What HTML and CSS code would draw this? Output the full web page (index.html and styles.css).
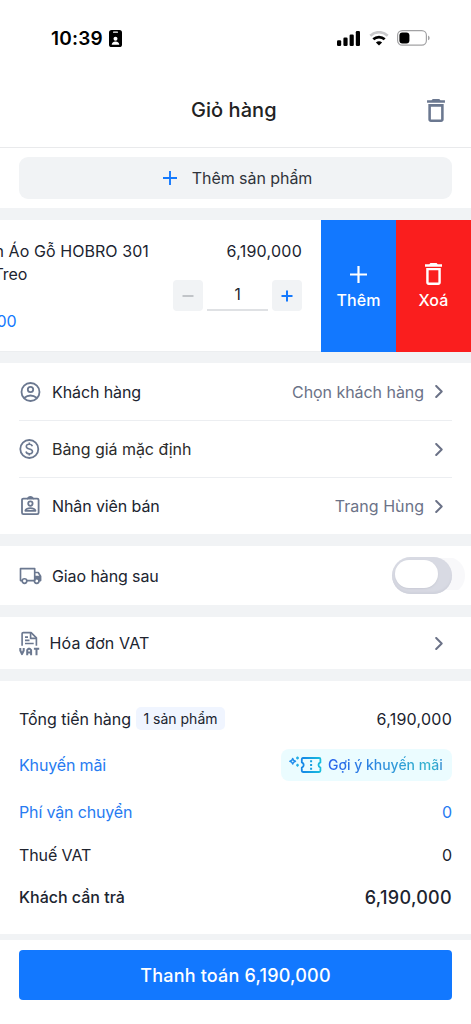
FILE: index.html
```
<!DOCTYPE html>
<html lang="vi">
<head>
<meta charset="utf-8">
<meta name="viewport" content="width=device-width, initial-scale=1">
<title>Giỏ hàng</title>
<link rel="stylesheet" href="styles.css">
</head>
<body>
<svg width="0" height="0" class="defs">
  <symbol id="trash" viewBox="5 3 14 18"><path d="M6 19c0 1.1.9 2 2 2h8c1.1 0 2-.9 2-2V7H6v12zM8 9h8v10H8V9zm7.5-5l-1-1h-5l-1 1H5v2h14V4z"/></symbol>
  <symbol id="chevron" viewBox="0 0 8 13"><path d="M1.200 1l5.500 5.500L1.200 12" fill="none" stroke="currentColor" stroke-width="2" stroke-linecap="round" stroke-linejoin="round"/></symbol>
</svg>
<div class="screen">
  <div class="status">
    <div class="clock">
      <span class="time">10:39</span>
      <svg width="13" height="17" viewBox="0 0 13 17"><rect width="13" height="17" rx="2.600"/><rect x="4" y="1.500" width="5" height="1.300" rx=".6" fill="#fff"/><circle cx="6.500" cy="8.700" r="2" fill="#fff"/><path d="M2.700 14.800c0-2 1.500-3.300 3.800-3.300s3.800 1.300 3.800 3.300z" fill="#fff"/></svg>
    </div>
    <div class="signals">
      <svg width="24" height="15" viewBox="0 0 24 15"><rect y="9.300" width="4.200" height="5.700" rx="1.200"/><rect x="6.400" y="6.500" width="4.200" height="8.500" rx="1.200"/><rect x="12.600" y="3.500" width="4.200" height="11.500" rx="1.200"/><rect x="18.800" y="0" width="4.200" height="15" rx="1.200"/></svg>
      <svg class="wifi" width="20" height="15" viewBox="0 0 20 15" fill="none"><path d="M1.300 4.700C6.300 0 13.700 0 18.700 4.700" stroke="#c9c9cb" stroke-width="2.600"/><path d="M4.300 8.300c3.300-3 8.100-3 11.400 0" stroke="#000" stroke-width="2.700"/><path d="M10 14.600l-3.100-3.100c1.800-1.600 4.400-1.600 6.200 0z" fill="#000"/></svg>
      <svg class="battery" width="33" height="16" viewBox="0 0 33 16"><rect x=".6" y=".6" width="28.800" height="14.600" rx="4.600" fill="none" stroke="#a2a2a4" stroke-width="1.200"/><rect x="2.400" y="2.400" width="10" height="11" rx="3"/><path d="M31 5.500q1.700.6 1.700 2.400T31 10.300z" fill="#a2a2a4"/></svg>
    </div>
  </div>
  <header class="header">
    <span class="title">Giỏ hàng</span>
    <svg class="header-trash" width="18" height="23"><use href="#trash"/></svg>
  </header>
  <div class="add-bar">
    <button class="add-button">
      <svg width="14" height="14" viewBox="0 0 14 14"><path d="M7 0v14M0 7h14" stroke="#1479fd" stroke-width="1.900"/></svg>
      <span>Thêm sản phẩm</span>
    </button>
  </div>
  <div class="product">
    <div class="product-info">
      <div class="product-name"><div class="name-line">n Áo Gỗ HOBRO 301</div><div class="name-line second">Treo</div></div>
      <div class="unit-price">00</div>
    </div>
    <div class="product-order">
      <span class="price">6,190,000</span>
      <div class="stepper">
        <span class="step"><svg width="12" height="12" viewBox="0 0 12 12"><path d="M.5 6h11" stroke="#c1c4c8" stroke-width="2"/></svg></span>
        <span class="quantity">1</span>
        <span class="step"><svg width="12" height="12" viewBox="0 0 12 12"><path d="M.5 6h11M6 .5v11" stroke="#1479fd" stroke-width="2"/></svg></span>
      </div>
    </div>
    <div class="swipe more">
      <svg width="17" height="17" viewBox="0 0 17 17"><path d="M8.500 0v17M0 8.500h17" stroke="#fff" stroke-width="2.200"/></svg>
      <span>Thêm</span>
    </div>
    <div class="swipe remove">
      <svg width="17" height="22"><use href="#trash"/></svg>
      <span>Xoá</span>
    </div>
  </div>
  <section class="rows">
    <div class="row">
      <svg class="icon" width="22" height="22" viewBox="0 0 22 22"><g class="line"><circle cx="11.500" cy="11" r="9"/><circle cx="11.500" cy="8.500" r="2.700"/><path d="M5 17q6.500-5 13 0"/></g></svg>
      <span class="label">Khách hàng</span><span class="value">Chọn khách hàng</span>
      <svg class="chevron" width="8" height="13"><use href="#chevron"/></svg>
    </div>
    <div class="row">
      <svg class="icon" width="22" height="22" viewBox="0 0 22 22"><g class="line"><circle cx="10.300" cy="11" r="9"/><path d="M13.300 8.200c-.3-1.200-1.300-1.900-3-1.900-1.800 0-3 .8-3 2.200 0 3.300 6.200 1.500 6.200 4.900 0 1.400-1.300 2.300-3.200 2.300-1.800 0-3-.8-3.300-2.200M10.300 4.600v1.700M10.300 15.700v1.700" stroke-width="1.600"/></g></svg>
      <span class="label dark">Bảng giá mặc định</span><span class="value"></span>
      <svg class="chevron" width="8" height="13"><use href="#chevron"/></svg>
    </div>
    <div class="row">
      <svg class="icon" width="22" height="22" viewBox="0 0 22 22"><g class="line"><path d="M9 3.700H4.400q-1.400 0-1.400 1.300v12.800q0 1.300 1.400 1.300h13.800q1.400 0 1.400-1.300V5q0-1.300-1.400-1.300H14" /><path d="M8.900 3.700q.4-1.900 2.500-1.900t2.500 1.900z"/><circle cx="11.400" cy="8.600" r="2.200"/><path d="M6.300 15.900v-.5q1.300-2.300 5.100-2.300t5.100 2.300v.5z" stroke-width="1.600"/></g></svg>
      <span class="label">Nhân viên bán</span><span class="value staff">Trang Hùng</span>
      <svg class="chevron" width="8" height="13"><use href="#chevron"/></svg>
    </div>
  </section>
  <section class="delivery">
    <svg class="icon" width="23" height="18" viewBox="0 0 23 18"><g class="line thin"><path d="M3 13.600H1.500V1.600h14.200v12H7.600"/><path d="M15.700 5.500h3.500l2.400 3.700v4.400h-2M15.700 9.500h5"/><circle cx="5.500" cy="14" r="2.300"/><circle cx="17.700" cy="14" r="2.300"/></g><path d="M16 9h5.600v4.600h-1.500q-2-2.500-4.100-1z"/></svg>
    <span class="label">Giao hàng sau</span>
    <span class="toggle"><span class="track"><span class="knob"></span></span></span>
  </section>
  <section class="vat">
    <svg class="icon" width="22" height="25" viewBox="0 0 22 25"><g class="line thin"><path d="M3.100 14.800V2.800q0-1.200 1.200-1.200h7.800l5.300 5.300v7.900"/><path d="M11.600 1.800v5.600h5.700M6 6.100h3M6 9.300h4.500M6 12.500h8.700"/><path d="M1.300 17v2.500L3 23.200l1.700-3.700V17M8.200 24.300v-5.100l1.100-1.400h1.600l1.200 1.400v5.100M8.200 21.500h3.900M14.900 17.800h5.300M17.500 17.800v6.500" class="bold"/></g></svg>
    <span class="label">Hóa đơn VAT</span>
    <svg class="chevron" width="8" height="13"><use href="#chevron"/></svg>
  </section>
  <section class="summary">
    <div class="sum total"><span>Tổng tiền hàng</span><span class="count">1 sản phẩm</span><span class="amount price">6,190,000</span></div>
    <div class="sum promo blue"><span>Khuyến mãi</span>
      <span class="suggest">
        <svg width="34" height="18" viewBox="0 0 34 18" fill="none"><defs><linearGradient id="tg" x1="0" x2="1" y1="0" y2="0"><stop stop-color="#1686e7"/><stop offset="1" stop-color="#18bddd"/></linearGradient></defs><path d="M4.700 2.500q.5 2.200 2.800 2.800-2.300.6-2.800 2.800-.5-2.200-2.800-2.800 2.300-.6 2.800-2.800z" stroke="#218cec" stroke-width="1.400" stroke-linejoin="round"/><path d="M9.500.5v3M8 2h3M9.500 7.700v3M8 9.200h3" stroke="#24afe6" stroke-width="1.300"/><path d="M15 2h16.200q1.200 0 1.200 1.200v3.200q-1.900.7-1.900 2.600t1.900 2.600v3.200q0 1.200-1.200 1.200H15q-1.200 0-1.200-1.200v-3.200q1.900-.7 1.900-2.600t-1.900-2.600V3.200Q13.800 2 15 2z" stroke="url(#tg)" stroke-width="1.800" stroke-linejoin="round"/><path d="M23.100 4.300v2M23.100 8v2M23.100 11.700v2" stroke="#159dde" stroke-width="2"/></svg>
        <span class="suggest-text">Gợi ý khuyến mãi</span>
      </span>
    </div>
    <div class="sum shipping blue"><span>Phí vận chuyển</span><span class="amount">0</span></div>
    <div class="sum tax"><span>Thuế VAT</span><span class="amount">0</span></div>
    <div class="sum due"><span>Khách cần trả</span><span class="amount strong">6,190,000</span></div>
  </section>
  <footer class="footer"><button class="pay">Thanh toán 6,190,000</button></footer>
</div>
</body>
</html>
```
FILE: styles.css
```
* { box-sizing: border-box; }
body { margin: 0; background: #fff; }
button { border: 0; padding: 0; font: inherit; letter-spacing: inherit; }
svg { display: block; flex: none; }
.defs { position: absolute; }
.screen { width: 471px; height: 1024px; overflow: hidden; display: flex; flex-direction: column; background: #f1f3f5; color: #20242f; font: 16px/24px Inter, "Noto Sans", sans-serif; letter-spacing: -.1px; white-space: nowrap; }
.screen > * { flex: none; }
.status { height: 73px; background: #fff; padding: 27px 41px 0 51px; display: flex; justify-content: space-between; align-items: flex-start; }
.clock { display: flex; align-items: center; gap: 6px; height: 22px; color: #000; }
.time { font-size: 19px; font-weight: 600; letter-spacing: .2px; padding-top: 1px; }
.signals { display: flex; align-items: center; height: 22px; }
.wifi { margin-left: 8px; }
.battery { margin-left: 8px; }
.header { height: 75px; background: #fff; border-bottom: 1px solid #e9eaec; display: flex; align-items: center; padding: 0 26px 0 191px; justify-content: space-between; font-size: 20px; font-weight: 450; letter-spacing: .05px; color: #222; }
.header-trash { fill: #6b7890; }
.add-bar { height: 60px; background: #fff; padding: 9px 19px; }
.add-button { width: 433px; height: 42px; border-radius: 9px; background: #f1f3f5; display: flex; align-items: center; justify-content: center; gap: 15px; padding-left: 4px; letter-spacing: -.05px; color: #30333b; }
.product { margin-top: 12px; height: 132px; background: #fff; display: flex; border-bottom: 1px solid #eceef0; }
.product-info { width: 160px; padding-top: 19px; }
.product-name { height: 70px; line-height: 23.5px; letter-spacing: .07px; padding-top: .5px; }
.name-line { margin-left: -5.500px; }
.second { margin-left: -6.500px; letter-spacing: -.1px; }
.unit-price { margin-left: -3.500px; color: #1479fd; }
.product-order { width: 161px; padding: 19px 19px 0 12px; display: flex; flex-direction: column; align-items: flex-end; }
.price { letter-spacing: .25px; }
.stepper { display: flex; margin-top: 17px; gap: 4px; }
.step { width: 30px; height: 31px; border-radius: 4px; background: #f1f3f5; display: flex; align-items: center; justify-content: center; }
.quantity { width: 61px; height: 31px; border-bottom: 2px solid #dfe1e4; text-align: center; line-height: 30px; font-size: 15.500px; }
.swipe { width: 75px; height: 132px; color: #fff; fill: #fff; display: flex; flex-direction: column; align-items: center; font-weight: 550; letter-spacing: .1px; }
.more { background: #1278ff; padding-top: 46px; gap: 5px; }
.remove { background: #fa1e1e; padding-top: 43px; gap: 3px; }
.rows { margin-top: 11px; padding: 0 19px; background: #fff; }
.row { height: 57px; display: flex; align-items: center; border-bottom: 1px solid #eceef1; padding-bottom: 0; }
.row:first-child { height: 58px; }
.row:last-child { height: 56px; border: 0; }
.icon { fill: #6b7890; }
.line { fill: none; stroke: #6b7890; stroke-width: 1.8; stroke-linejoin: round; }
.thin { stroke-width: 1.65; }
.bold { stroke-width: 2; }
.row .label { margin-left: 11px; }
.row .dark { color: #2b2b2b; letter-spacing: -.05px; }
.value { margin-left: auto; color: #6b7287; letter-spacing: -.05px; }
.staff { letter-spacing: .05px; }
.chevron { margin: 0 9px 0 11px; color: #6b7287; }
.delivery { margin-top: 12px; height: 59px; background: #fff; padding: 0 19px; display: flex; align-items: center; }
.delivery .label { margin-left: 10px; }
.toggle { margin: 0 -13px 0 auto; width: 73px; height: 37px; display: flex; align-items: center; background: linear-gradient(#f8f8fa, #f8f8fa) right 1px / 50px 32px no-repeat; border-radius: 0 18px 18px 0; }
.track { width: 60px; height: 37px; border-radius: 18.5px; background: #d8dae3; padding: 3px; box-shadow: inset 0 -2px 2px #d0d2dc; }
.knob { display: block; width: 43px; height: 28px; background: #fff; border-radius: 14px; box-shadow: 0 1px 2px #c9cbd5; }
.vat { margin-top: 12px; height: 52px; background: #fff; padding: 0 19px; display: flex; align-items: center; }
.vat .label { margin-left: 8.500px; letter-spacing: .15px; }
.vat .chevron { margin-left: auto; }
.summary { margin-top: 12px; height: 253px; background: #fff; padding: 14px 19px 0; }
.sum { display: flex; align-items: center; }
.total { height: 47px; letter-spacing: -.04px; }
.promo { height: 46px; }
.shipping { height: 47px; }
.tax { height: 39px; }
.due { height: 45px; font-weight: 500; letter-spacing: 0; }
.amount { margin-left: auto; }
.blue { color: #277bf1; letter-spacing: -.15px; }
.count { margin-left: 5px; width: 89px; height: 23px; border-radius: 5px; background: #f0f5ff; display: flex; align-items: center; justify-content: center; font-size: 14px; letter-spacing: 0; }
.suggest { margin-left: auto; width: 171px; height: 32px; border-radius: 8px; background: #ebfcff; display: flex; align-items: center; padding-left: 7px; gap: 6px; letter-spacing: 0; }
.suggest-text { font-size: 14px; font-weight: 500; background: linear-gradient(90deg, #2862ee, #32b6cd 90%, #398bd4); background-clip: text; -webkit-background-clip: text; color: transparent; }
.strong { font-size: 18px; font-weight: 550; letter-spacing: .32px; padding-top: 2px; }
.footer { margin-top: 6px; height: 84px; background: #fff; padding: 10px 19px 0; }
.pay { width: 433px; height: 50px; border-radius: 4px; background: #1278ff; color: #fff; font-size: 18px; font-weight: 500; letter-spacing: .2px; padding-top: 1px; }
```
